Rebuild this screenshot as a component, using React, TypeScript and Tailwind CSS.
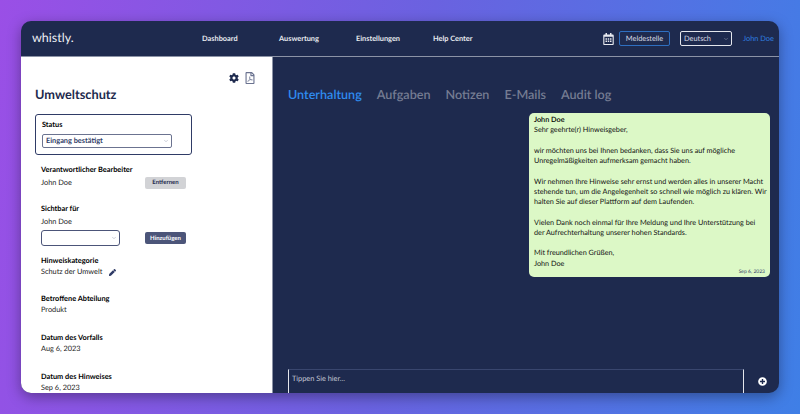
import { ChevronDown } from "lucide-react";
import { FaCog, FaRegFilePdf, FaPen, FaRegCalendarAlt, FaPlusCircle } from "react-icons/fa";

const navItems = ["Dashboard", "Auswertung", "Einstellungen", "Help Center"];
const tabs = ["Unterhaltung", "Aufgaben", "Notizen", "E-Mails", "Audit log"];

function Field({ label, value, className = "" }: { label: string; value: string; className?: string }) {
  return (
    <div className={className}>
      <div className="text-[7.36px] font-bold leading-[10px] text-black">{label}</div>
      <div className="mt-[1px] text-[7.36px] leading-[10px] text-[#222]">{value}</div>
    </div>
  );
}

export default function App() {
  return (
    <div className="h-[414px] w-[800px] overflow-hidden bg-[linear-gradient(100deg,#9a4fe6_0%,#6a62e0_50%,#3f7fe6_100%)] p-[21px] font-['Lato','Noto_Sans',sans-serif] [text-rendering:geometricPrecision]">
      <div className="flex h-[372px] w-[758px] flex-col overflow-hidden rounded-[10px] bg-[#1e2a4e] shadow-[0_4px_14px_rgba(0,0,0,0.35)]">
        <header className="flex h-[36px] shrink-0 items-center border-b border-[#8c93a6] pl-[11px] pr-[6px]">
          <div className="w-[170px] text-[12.5px] font-normal text-[#eceef3]">whistly.</div>
          <nav className="flex text-[7.36px] font-bold text-[#e8eaf0]">
            {navItems.map((item, i) => (
              <span key={item} className={i < 3 ? "w-[77px]" : ""}>
                {item}
              </span>
            ))}
          </nav>
          <div className="ml-auto flex items-center">
            <FaRegCalendarAlt className="h-[12px] w-[11px] text-[#e8eaf0]" />
            <div className="ml-[5px] flex h-[15px] w-[51px] items-center justify-center rounded-[2px] border border-[#2f6fc0] text-[7.36px] text-[#d8dbe4]">
              Meldestelle
            </div>
            <div className="ml-[10px] flex h-[15px] w-[52px] items-center justify-between rounded-[2px] border border-[#e4e6ec] pl-[3px] pr-[2px] text-[7.36px] text-[#d8dbe4]">
              Deutsch
              <ChevronDown className="h-[6px] w-[6px] text-[#9aa0b2]" />
            </div>
            <span className="ml-[11px] w-[30px] whitespace-nowrap text-[7.36px] text-[#2f7fe0]">John Doe</span>
          </div>
        </header>

        <div className="flex min-h-0 flex-1">
          <aside className="relative w-[252px] shrink-0 overflow-hidden border-r border-[#8c93a6] bg-white pl-[14px]">
            <div className="absolute right-[17px] top-[15px] flex items-center gap-[6px] text-[#1e2a4e]">
              <FaCog className="h-[10px] w-[10px]" />
              <FaRegFilePdf className="h-[12px] w-[10px] text-[#6b7390]" />
            </div>
            <h1 className="mt-[29px] text-[12.75px] font-bold leading-[17px] text-[#1e2a4e]">Umweltschutz</h1>
            <div className="mt-[11px] h-[41px] w-[157px] rounded-[3px] border border-[#2f3b66] px-[6px] pt-[5px]">
              <div className="text-[7.36px] font-bold leading-[10px] text-black">Status</div>
              <div className="mt-[4px] flex h-[14px] w-[130px] items-center justify-between rounded-[2px] border border-[#6b7390] pl-[3px] pr-[2px] text-[7.36px] font-bold text-[#2f3b66]">
                Eingang bestätigt
                <ChevronDown className="h-[6px] w-[6px] text-[#9aa0b2]" />
              </div>
            </div>

            <div className="ml-[6px]">
              <div className="mt-[10px] text-[7.36px] font-bold leading-[10px] text-black">Verantwortlicher Bearbeiter</div>
              <div className="mt-[1px] flex h-[13px] items-center text-[7.36px] text-[#222]">
                <span className="w-[104px]">John Doe</span>
                <span className="flex h-[12px] w-[41px] items-center justify-center rounded-[2px] bg-[#d2d3d6] text-[6px] font-bold text-[#1e2a4e]">
                  Entfernen
                </span>
              </div>

              <div className="mt-[15px] text-[7.36px] font-bold leading-[10px] text-black">Sichtbar für</div>
              <div className="mt-[3px] text-[7.36px] leading-[10px] text-[#222]">John Doe</div>
              <div className="mt-[3px] flex items-center">
                <div className="flex h-[16px] w-[79px] items-center justify-end rounded-[3px] border border-[#4c5579] pr-[2px]">
                  <ChevronDown className="h-[6px] w-[6px] text-[#9aa0b2]" />
                </div>
                <span className="ml-[25px] flex h-[12px] w-[41px] items-center justify-center rounded-[2px] bg-[#4c5579] text-[6px] font-bold text-white">
                  Hinzufügen
                </span>
              </div>

              <div className="mt-[10px] text-[7.36px] font-bold leading-[10px] text-black">Hinweiskategorie</div>
              <div className="mt-[1px] flex items-center text-[7.36px] leading-[10px] text-[#222]">
                Schutz der Umwelt
                <FaPen className="ml-[7px] h-[7px] w-[7px] text-[#2f3b66]" />
              </div>

              <Field label="Betroffene Abteilung" value="Produkt" className="mt-[17px]" />
              <Field label="Datum des Vorfalls" value="Aug 6, 2023" className="mt-[18px]" />
              <Field label="Datum des Hinweises" value="Sep 6, 2023" className="mt-[18px]" />
            </div>
          </aside>

          <main className="flex min-w-0 flex-1 flex-col pl-[15px] pr-[9px]">
            <div className="mt-[28px] flex gap-[15px] text-[12.6px] font-semibold leading-[19px] text-[#757c92]">
              {tabs.map((tab, i) => (
                <span key={tab} className={i === 0 ? "text-[#2f8cf0]" : ""}>
                  {tab}
                </span>
              ))}
            </div>
            <div className="mt-[9px] flex justify-end">
              <div className="h-[164px] w-[241px] rounded-[5px] bg-[#dcf8c6] pl-[5px] pr-[3px] pt-[2px] text-[7.25px] leading-[10.25px] text-[#111]">
                <div className="font-semibold text-black">John Doe</div>
                <p>Sehr geehrte(r) Hinweisgeber,</p>
                <p className="mt-[10.25px]">wir möchten uns bei Ihnen bedanken, dass Sie uns auf mögliche Unregelmäßigkeiten aufmerksam gemacht haben.</p>
                <p className="mt-[10.25px]">Wir nehmen Ihre Hinweise sehr ernst und werden alles in unserer Macht stehende tun, um die Angelegenheit so schnell wie möglich zu klären. Wir halten Sie auf dieser Plattform auf dem Laufenden.</p>
                <p className="mt-[10.25px]">Vielen Dank noch einmal für Ihre Meldung und Ihre Unterstützung bei der Aufrechterhaltung unserer hohen Standards.</p>
                <p className="mt-[10.25px]">Mit freundlichen Grüßen,<br />John Doe</p>
                <div className="pr-[2px] text-right text-[5px] leading-[7px] text-[#2f3b66]">Sep 6, 2023</div>
              </div>
            </div>
            <div className="mt-auto flex items-start">
              <div className="h-[24px] flex-1 border-x border-t border-x-[#e4e6ec] border-t-[#39466e] pl-[3px] pt-[4px] text-[7.36px] leading-[10px] text-[#c4c8d4]">
                Tippen Sie hier...
              </div>
              <FaPlusCircle className="ml-[14px] mr-[3px] mt-[8px] h-[9px] w-[9px] text-white" />
            </div>
          </main>
        </div>
      </div>
    </div>
  );
}
